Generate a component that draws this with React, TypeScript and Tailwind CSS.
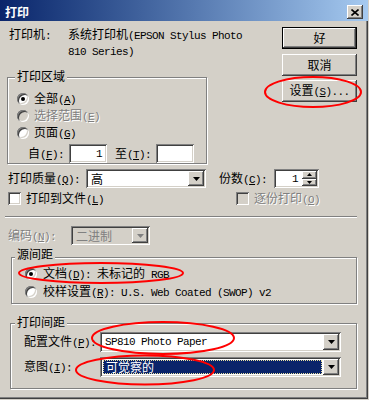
import React from "react";

const SUNK =
  "shadow-[inset_1px_1px_0_#808080,inset_-1px_-1px_0_#fff,inset_2px_2px_0_#404040,inset_-2px_-2px_0_#d4d0c8]";
const RAISED =
  "shadow-[inset_-1px_-1px_0_#404040,inset_1px_1px_0_#fff,inset_-2px_-2px_0_#808080,inset_2px_2px_0_#d4d0c8]";
const GROUP = "border border-[#808080] shadow-[1px_1px_0_#fff,inset_1px_1px_0_#fff]";
const DIS = "text-[#808080] [text-shadow:1px_1px_0_#fff]";

// latin glyphs in the narrow mono look of the old bitmap font
function M({ children }: { children: React.ReactNode }) {
  return (
    <span className="font-['Liberation_Mono',monospace] text-[11px] tracking-[-0.6px]">{children}</span>
  );
}

function K({ c }: { c: string }) {
  return (
    <M>
      (<u>{c}</u>)
    </M>
  );
}

function Arrow({ color = "#000" }: { color?: string }) {
  return (
    <svg width="7" height="4" viewBox="0 0 7 4">
      <path d="M0 0h7L3.5 4z" fill={color} />
    </svg>
  );
}

function Combo({
  className,
  children,
  disabled,
  selected,
}: {
  className: string;
  children: React.ReactNode;
  disabled?: boolean;
  selected?: boolean;
}) {
  return (
    <div className={`flex p-[2px] ${SUNK} ${disabled ? "bg-[#d4d0c8]" : "bg-white"} ${className}`}>
      <div className="flex-1 flex p-[1px]">
        <div
          className={`flex-1 flex items-center pl-[2px] ${
            selected ? "bg-[#0a246a] text-white border border-dotted border-[#e8e0a0]" : ""
          } ${disabled ? "text-[#808080]" : ""}`}
        >
          {children}
        </div>
      </div>
      <div className={`w-[16px] flex items-center justify-center bg-[#d4d0c8] ${RAISED}`}>
        <Arrow color={disabled ? "#808080" : "#000"} />
      </div>
    </div>
  );
}

function Radio({ checked, disabled }: { checked?: boolean; disabled?: boolean }) {
  return (
    <span
      className={`w-[12px] h-[12px] rounded-full shrink-0 flex items-center justify-center ${SUNK} ${
        disabled ? "bg-[#d4d0c8]" : "bg-white"
      }`}
    >
      {checked && <span className="w-[4px] h-[4px] rounded-full bg-black" />}
    </span>
  );
}

function Check({ disabled }: { disabled?: boolean }) {
  return <span className={`w-[13px] h-[13px] shrink-0 ${SUNK} ${disabled ? "bg-[#d4d0c8]" : "bg-white"}`} />;
}

function Btn({ children, def, className }: { children: React.ReactNode; def?: boolean; className: string }) {
  return (
    <div className={`w-[75px] h-[22px] ${def ? "border border-black" : ""} ${className}`}>
      <div className={`h-full flex items-center justify-center ${RAISED}`}>{children}</div>
    </div>
  );
}

export default function App() {
  return (
    <div className="relative w-[369px] h-[400px] bg-[#d4d0c8] overflow-hidden text-[12px] leading-[14px] text-black font-['Noto_Sans_CJK_SC',sans-serif]">
      <div className="w-[368px] h-[399px] flex flex-col shadow-[inset_-1px_-1px_0_#404040,inset_-2px_-2px_0_#808080]">
        {/* title bar */}
        <div className="h-[21px] shrink-0 flex items-start justify-between pl-[5px] pr-[5px] bg-linear-to-r from-[#0a246a] to-[#a6caf0]">
          <span className="mt-[4px] font-bold text-white leading-[16px]">打印</span>
          <div className={`mt-[5px] w-[16px] h-[14px] flex items-center justify-center bg-[#d4d0c8] ${RAISED}`}>
            <svg width="8" height="7" viewBox="0 0 8 7">
              <path d="M0.5 0.5L7.5 6.5M7.5 0.5L0.5 6.5" stroke="#000" strokeWidth="1.6" />
            </svg>
          </div>
        </div>

        {/* printer + range + buttons */}
        <div className="h-[142px] shrink-0 flex">
          <div className="w-[282px] flex flex-col">
            <div className="mt-[6px] ml-[9px] flex leading-[13px]">
              <span className="w-[59px]">
                打印机<M>:</M>
              </span>
              <span>
                系统打印机<M>(EPSON Stylus Photo</M>
                <br />
                <M>810 Series)</M>
              </span>
            </div>

            <div className={`mt-[18px] ml-[7px] w-[200px] h-[92px] flex flex-col ${GROUP}`}>
              <span className="-mt-[9px] ml-[7px] px-[2px] w-fit bg-[#d4d0c8]">打印区域</span>
              <div className="mt-[7px] ml-[9px] h-[17px] flex items-center gap-[5px]">
                <Radio checked />
                <span>
                  全部<K c="A" />
                </span>
              </div>
              <div className="ml-[9px] h-[17px] flex items-center gap-[5px]">
                <Radio disabled />
                <span className={DIS}>
                  选择范围<K c="E" />
                </span>
              </div>
              <div className="ml-[9px] h-[17px] flex items-center gap-[5px]">
                <Radio />
                <span>
                  页面<K c="G" />
                </span>
              </div>
              <div className="mt-[3px] ml-[20px] h-[19px] flex items-center">
                <span className="w-[41px]">
                  自<K c="F" />
                  <M>:</M>
                </span>
                <div className={`w-[38px] h-full bg-white flex items-center justify-end pr-[5px] ${SUNK}`}>
                  <M>1</M>
                </div>
                <span className="ml-[8px] w-[41px]">
                  至<K c="T" />
                  <M>:</M>
                </span>
                <div className={`w-[38px] h-full bg-white ${SUNK}`} />
              </div>
            </div>
          </div>

          <div className="w-[75px] flex flex-col">
            <Btn def className="mt-[6px]">
              好
            </Btn>
            <Btn className="mt-[5px]">取消</Btn>
            <Btn className="mt-[4px]">
              <span>
                设置<K c="S" />
                <M>...</M>
              </span>
            </Btn>
          </div>
        </div>

        {/* quality + copies */}
        <div className="mt-[6px] h-[19px] shrink-0 flex items-center">
          <span className="ml-[8px] w-[78px]">
            打印质量<K c="Q" />
            <M>:</M>
          </span>
          <Combo className="w-[120px] h-full">高</Combo>
          <span className="ml-[13px] w-[55px]">
            份数<K c="C" />
            <M>:</M>
          </span>
          <div className={`w-[45px] h-full flex p-[2px] bg-white ${SUNK}`}>
            <div className="flex-1 flex items-center justify-end pr-[4px]">
              <M>1</M>
            </div>
            <div className="w-[15px] flex flex-col">
              <div className={`flex-1 flex items-center justify-center bg-[#d4d0c8] ${RAISED}`}>
                <svg width="5" height="3" viewBox="0 0 5 3">
                  <path d="M2.5 0L5 3H0z" fill="#000" />
                </svg>
              </div>
              <div className={`flex-1 flex items-center justify-center bg-[#d4d0c8] ${RAISED}`}>
                <svg width="5" height="3" viewBox="0 0 5 3">
                  <path d="M0 0h5L2.5 3z" fill="#000" />
                </svg>
              </div>
            </div>
          </div>
        </div>

        {/* checkboxes */}
        <div className="mt-[4px] h-[13px] shrink-0 flex items-center">
          <div className="ml-[8px] w-[228px] flex items-center gap-[5px]">
            <Check />
            <span>
              打印到文件<K c="L" />
            </span>
          </div>
          <div className="flex items-center gap-[5px]">
            <Check disabled />
            <span className={DIS}>
              逐份打印<K c="O" />
            </span>
          </div>
        </div>

        <div className="mt-[11px] ml-[5px] w-[352px] h-[2px] shrink-0 border-t border-b border-t-[#808080] border-b-white" />

        {/* encoding */}
        <div className="mt-[8px] h-[19px] shrink-0 flex items-center">
          <span className={`ml-[8px] w-[63px] ${DIS}`}>
            编码<K c="N" />
            <M>:</M>
          </span>
          <Combo disabled className="w-[79px] h-full">
            二进制
          </Combo>
        </div>

        {/* source space */}
        <div className={`mt-[12px] ml-[11px] w-[346px] h-[47px] shrink-0 flex flex-col ${GROUP}`}>
          <span className="-mt-[11px] ml-[3px] px-[2px] w-fit bg-[#d4d0c8]">源间距</span>
          <div className="mt-[4px] ml-[13px] h-[18px] flex items-center gap-[6px]">
            <Radio checked />
            <span>
              文档<K c="D" />
              <M>: </M>未标记的<M> RGB</M>
            </span>
          </div>
          <div className="ml-[13px] h-[18px] flex items-center gap-[6px]">
            <Radio />
            <span>
              校样设置<K c="R" />
              <M>: U.S. Web Coated (SWOP) v2</M>
            </span>
          </div>
        </div>

        {/* print space */}
        <div className={`mt-[19px] ml-[10px] w-[347px] h-[66px] shrink-0 flex flex-col ${GROUP}`}>
          <span className="-mt-[9px] ml-[4px] px-[2px] w-fit bg-[#d4d0c8]">打印间距</span>
          <div className="mt-[3px] h-[20px] flex items-center">
            <span className="ml-[13px] w-[76px]">
              配置文件<K c="P" />
              <M>:</M>
            </span>
            <Combo className="w-[241px] h-full">
              <M>SP810 Photo Paper</M>
            </Combo>
          </div>
          <div className="mt-[5px] h-[20px] flex items-center">
            <span className="ml-[13px] w-[76px]">
              意图<K c="I" />
              <M>:</M>
            </span>
            <Combo selected className="w-[241px] h-full">
              可觉察的
            </Combo>
          </div>
        </div>
      </div>

      {/* red annotation marks */}
      <svg className="absolute left-0 top-0 pointer-events-none" width="369" height="400" viewBox="0 0 369 400">
        <g fill="none" stroke="#ff0000" strokeWidth="2">
          <ellipse cx="313" cy="92" rx="48" ry="15" />
          <ellipse cx="101" cy="273" rx="82" ry="10" />
          <ellipse cx="163" cy="338" rx="71" ry="16" />
          <ellipse cx="145" cy="370" rx="69" ry="14.5" />
        </g>
      </svg>
    </div>
  );
}
